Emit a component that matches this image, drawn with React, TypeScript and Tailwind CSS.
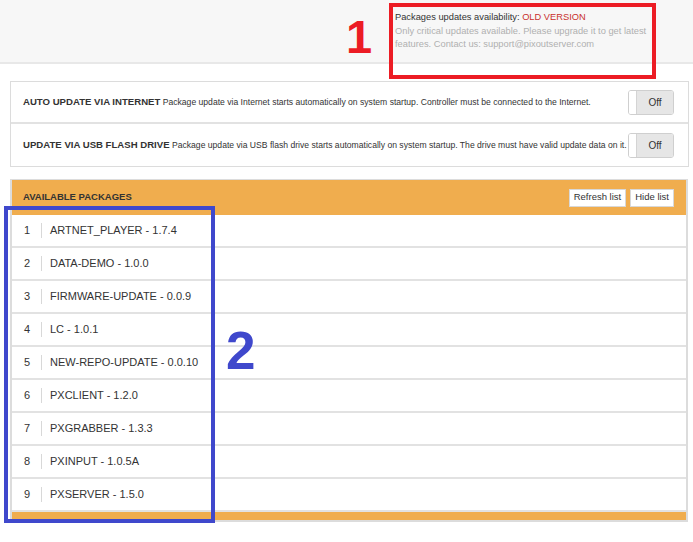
import React from "react";

const packages = [
  "ARTNET_PLAYER - 1.7.4",
  "DATA-DEMO - 1.0.0",
  "FIRMWARE-UPDATE - 0.0.9",
  "LC - 1.0.1",
  "NEW-REPO-UPDATE - 0.0.10",
  "PXCLIENT - 1.2.0",
  "PXGRABBER - 1.3.3",
  "PXINPUT - 1.0.5A",
  "PXSERVER - 1.5.0",
];

const settings = [
  {
    title: "AUTO UPDATE VIA INTERNET",
    text: "Package update via Internet starts automatically on system startup. Controller must be connected to the Internet.",
  },
  {
    title: "UPDATE VIA USB FLASH DRIVE",
    text: "Package update via USB flash drive starts automatically on system startup. The drive must have valid update data on it.",
  },
];

function Toggle() {
  return (
    <div className="flex h-[25px] w-[46px] shrink-0 overflow-hidden rounded-[3px] border border-[#cfcfcf]">
      <div className="w-[8px] border-r border-[#d4d4d4] bg-white" />
      <div className="flex flex-1 items-center justify-center bg-[#e6e6e6] text-[10px] text-[#333]">Off</div>
    </div>
  );
}

export default function App() {
  return (
    <div className="relative h-[542px] w-[693px] overflow-hidden bg-white font-['Liberation_Sans',Arial,sans-serif] text-[#333]">
      {/* top status bar */}
      <div className="h-[64px] border-b-2 border-[#e8e8e8] bg-[#f7f7f7]">
        <div className="ml-[395px] w-[264px] pt-[11px] text-[9.3px] leading-[13.5px]">
          <p>
            Packages updates availability: <span className="text-[#c9302c]">OLD VERSION</span>
          </p>
          <p className="text-[#b0b0b0]">
            Only critical updates available. Please upgrade it to get latest features. Contact us: support@pixoutserver.com
          </p>
        </div>
      </div>

      {/* update settings */}
      <div className="ml-[10px] mr-[4px] mt-[17px] border border-[#dcdcdc]">
        {settings.map((s, i) => (
          <div key={s.title} className={`flex h-[42px] items-center pl-[12px] pr-[14px] ${i === 0 ? "border-b-2 border-[#e2e2e2]" : ""}`}>
            <p className="flex-1 whitespace-nowrap text-[8.6px]">
              <span className="text-[9.6px] font-bold">{s.title}</span> {s.text}
            </p>
            <Toggle />
          </div>
        ))}
      </div>

      {/* package list */}
      <div className="ml-[10px] mr-[5px] mt-[12px] border-2 border-t-[1px] border-[#dcdcdc]">
        <div className="flex h-[35px] items-center justify-between bg-[#f0ad4e] pl-[11px] pr-[12px]">
          <span className="text-[9.5px] font-bold text-[#333]">AVAILABLE PACKAGES</span>
          <div className="flex gap-[4px]">
            <button className="h-[18px] border border-[#d8d8d8] bg-white px-[4px] text-[9.5px] text-[#333]">Refresh list</button>
            <button className="h-[18px] border border-[#d8d8d8] bg-white px-[4px] text-[9.5px] text-[#333]">Hide list</button>
          </div>
        </div>
        {packages.map((p, i) => (
          <div key={p} className="flex h-[33px] items-center border-b-2 border-[#e2e2e2] bg-white">
            <span className="w-[29px] pl-[12px] text-[11px]">{i + 1}</span>
            <span className="h-[15px] w-px bg-[#d8d8d8]" />
            <span className="pl-[8px] text-[11px]">{p}</span>
          </div>
        ))}
        <div className="h-[8px] bg-[#f0ad4e]" />
      </div>

      {/* annotation 1 */}
      <div className="absolute left-[389px] top-[3px] h-[76px] w-[267px] border-[4px] border-[#ec1c24]" />
      <div className="absolute left-[346px] top-[13px] text-[47px] font-bold leading-none text-[#ec1c24]">1</div>

      {/* annotation 2 */}
      <div className="absolute left-[4px] top-[206px] h-[317px] w-[211px] border-[4px] border-[#3f48cc]" />
      <div className="absolute left-[226px] top-[324px] text-[53px] font-bold leading-none text-[#3f48cc]">2</div>
    </div>
  );
}
